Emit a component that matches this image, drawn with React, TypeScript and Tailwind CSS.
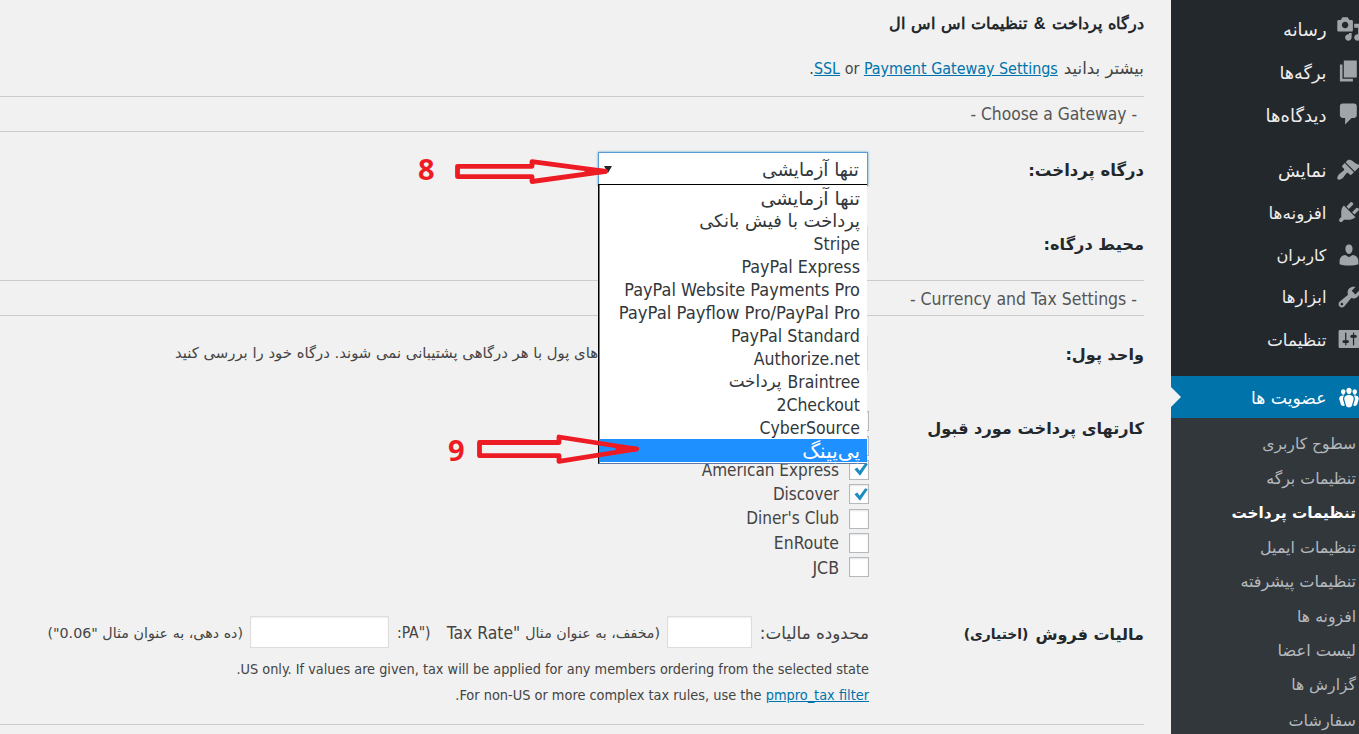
import type { ReactNode } from 'react';

const AR = "[font-family:'DejaVu_Sans',sans-serif] whitespace-nowrap";
const AR_HEAD = "[font-family:'Liberation_Sans',sans-serif] whitespace-nowrap";
const LA = "[font-family:'DejaVu_Sans_Condensed','DejaVu_Sans',sans-serif] whitespace-nowrap";

const ICONS = {
  media:
    'M13 11V4c0-.55-.45-1-1-1h-1.67L9 1H5L3.67 3H2c-.55 0-1 .45-1 1v7c0 .55.45 1 1 1h10c.55 0 1-.45 1-1zM7 4.5c1.38 0 2.5 1.12 2.5 2.5S8.38 9.5 7 9.5 4.5 8.38 4.5 7 5.62 4.5 7 4.5zM14 6h5v10.5c0 1.38-1.12 2.5-2.5 2.5S14 17.88 14 16.5s1.12-2.5 2.5-2.5c.17 0 .34.02.5.05V9h-3V6zm-4 8.05V13h2v3.5c0 1.38-1.12 2.5-2.5 2.5S7 17.88 7 16.5 8.12 14 9.5 14c.17 0 .34.02.5.05z',
  page: 'M6 15V2h10v13H6zm-1 1h8v2H3V5h2v11z',
  comments:
    'M5 2h9c1.1 0 2 .9 2 2v7c0 1.1-.9 2-2 2h-2l-5 5v-5H5c-1.1 0-2-.9-2-2V4c0-1.1.9-2 2-2z',
  appearance:
    'M14.48 11.06L7.41 3.99l1.5-1.5c.5-.56 2.3-.47 3.51.32 1.21.8 1.43 1.28 2.91 2.1 1.18.64 2.45 1.26 4.45.85zm-.71.71L6.7 4.7 4.93 6.47c-.39.39-.39 1.02 0 1.41l1.06 1.06c.39.39.39 1.03 0 1.42-.6.6-1.43 1.11-2.21 1.69-.35.26-.7.53-1.01.84C1.43 14.23.4 16.08 1.4 17.07c.99 1 2.84-.03 4.18-1.36.31-.31.58-.66.85-1.02.57-.78 1.08-1.61 1.69-2.21.39-.39 1.02-.39 1.41 0l1.06 1.06c.39.39 1.02.39 1.41 0z',
  plugins:
    'M13.11 4.36L9.87 7.6 8 5.73l3.24-3.24c.35-.34 1.05-.2 1.56.32.52.51.66 1.21.31 1.55zm-8 1.77l.91-1.12 9.01 9.01-1.19.84c-.71.71-2.63 1.16-3.82 1.16H6.14L4.9 17.26c-.59.59-1.54.59-2.12 0-.59-.58-.59-1.53 0-2.12l1.24-1.24v-3.88c0-1.13.4-3.19 1.09-3.89zm7.26 3.97l3.24-3.24c.34-.35 1.04-.21 1.55.31.52.51.66 1.21.31 1.55l-3.24 3.25z',
  users:
    'M10 9.25c-2.27 0-2.73-3.44-2.73-3.44C7 4.02 7.82 2 9.97 2c2.16 0 2.98 2.02 2.71 3.81 0 0-.41 3.44-2.68 3.44zm0 2.57L12.72 10c2.39 0 4.52 2.33 4.52 4.53v2.49s-3.65 1.13-7.24 1.13c-3.65 0-7.24-1.13-7.24-1.13v-2.49c0-2.25 1.94-4.48 4.47-4.48z',
  tools:
    'M16.68 9.77c-1.34 1.34-3.3 1.67-4.95.99l-5.41 6.52c-.99.99-2.59.99-3.58 0s-.99-2.59 0-3.57l6.52-5.42c-.68-1.65-.35-3.61.99-4.95 1.28-1.28 3.12-1.62 4.72-1.06l-2.89 2.89 2.82 2.82 2.86-2.87c.53 1.58.18 3.39-1.08 4.65zM3.81 16.21c.4.39 1.04.39 1.43 0 .4-.4.4-1.04 0-1.43-.39-.4-1.03-.4-1.43 0-.39.39-.39 1.03 0 1.43z',
  settings:
    'M18 16V4c0-.55-.45-1-1-1H3c-.55 0-1 .45-1 1v12c0 .55.45 1 1 1h14c.55 0 1-.45 1-1zM8 11h1c.55 0 1 .45 1 1s-.45 1-1 1H8v1.5c0 .28-.22.5-.5.5s-.5-.22-.5-.5V13H6c-.55 0-1-.45-1-1s.45-1 1-1h1V5.5c0-.28.22-.5.5-.5s.5.22.5.5V11zm5-2h-1c-.55 0-1-.45-1-1s.45-1 1-1h1V5.5c0-.28.22-.5.5-.5s.5.22.5.5V7h1c.55 0 1 .45 1 1s-.45 1-1 1h-1v5.5c0 .28-.22.5-.5.5s-.5-.22-.5-.5V9z',
  groups:
    'M8.03 4.46c-.29 1.28.55 3.46 1.97 3.46 1.41 0 2.25-2.18 1.96-3.46-.22-.98-1.08-1.63-1.96-1.63-.89 0-1.74.65-1.97 1.63zm-4.13.9c-.25 1.08.47 2.93 1.67 2.93s1.92-1.85 1.67-2.93c-.19-.83-.92-1.39-1.67-1.39s-1.48.56-1.67 1.39zm8.86 0c-.25 1.08.47 2.93 1.66 2.93 1.2 0 1.92-1.85 1.67-2.93-.19-.83-.92-1.39-1.67-1.39-.74 0-1.47.56-1.66 1.39zm-.59 11.43l1.25-4.3C14.2 10 12.71 8.47 10 8.47c-2.72 0-4.21 1.53-3.44 4.02l1.26 4.3C8.05 17.51 9 18 10 18c.98 0 1.94-.49 2.17-1.21zm-6.1-7.63c-.49.67-.96 1.83-.42 3.59l1.12 3.79c-.34.2-.77.31-1.2.31-.85 0-1.65-.41-1.85-1.03l-1.07-3.65c-.65-2.11.61-3.4 2.92-3.4.27 0 .54.02.79.06-.1.1-.2.22-.29.33zm8.35-.39c2.31 0 3.58 1.29 2.92 3.4l-1.07 3.65c-.2.62-1 1.03-1.85 1.03-.43 0-.86-.11-1.2-.31l1.11-3.77c.55-1.78.08-2.94-.42-3.61-.08-.11-.18-.23-.28-.33.25-.04.51-.06.78-.06z',
};

type IconName = keyof typeof ICONS;

function MenuItem({ icon, label, size, active }: { icon: IconName; label: string; size: string; active?: boolean }) {
  return (
    <div className={`flex items-center shrink-0 ${active ? 'h-[42px] bg-[#0073aa] text-white relative' : 'h-[42.3px] text-[#eee]'}`}>
      <svg
        viewBox="0 0 20 20"
        className={`w-[26px] h-[26px] -ms-[2.5px] shrink-0 ${active ? 'fill-white' : 'fill-[#a0a5aa]'}`}
      >
        <path d={ICONS[icon]} />
      </svg>
      <span className={`${AR} ${size} ms-[9px] pt-[3px]`}>{label}</span>
      {active && (
        <svg viewBox="0 0 10 20" className="absolute left-0 top-[11px] w-[10px] h-[20px] fill-[#f1f1f1]">
          <path d="M0 0L10 10L0 20Z" />
        </svg>
      )}
    </div>
  );
}

const SUBMENU: { label: string; cls: string }[] = [
  { label: 'سطوح کاربری', cls: 'text-[15.6px]' },
  { label: 'تنظیمات برگه', cls: 'text-[15.8px]' },
  { label: 'تنظیمات پرداخت', cls: 'text-[15.2px] font-bold text-white' },
  { label: 'تنظیمات ایمیل', cls: 'text-[15.9px]' },
  { label: 'تنظیمات پیشرفته', cls: 'text-[16.1px]' },
  { label: 'افزونه ها', cls: 'text-[15.7px]' },
  { label: 'لیست اعضا', cls: 'text-[16.2px]' },
  { label: 'گزارش ها', cls: 'text-[15.6px]' },
  { label: 'سفارشات', cls: 'text-[16px]' },
];

function Sidebar() {
  return (
    <aside className="w-[188px] shrink-0 bg-[#23282d] flex flex-col pt-[8px]">
      <MenuItem icon="media" label="رسانه" size="text-[17.8px]" />
      <MenuItem icon="page" label="برگه‌ها" size="text-[17.6px]" />
      <MenuItem icon="comments" label="دیدگاه‌ها" size="text-[18px]" />
      <div className="h-[14px] shrink-0" />
      <MenuItem icon="appearance" label="نمایش" size="text-[17.9px]" />
      <MenuItem icon="plugins" label="افزونه‌ها" size="text-[16.9px]" />
      <MenuItem icon="users" label="کاربران" size="text-[16.1px]" />
      <MenuItem icon="tools" label="ابزارها" size="text-[16.6px]" />
      <MenuItem icon="settings" label="تنظیمات" size="text-[16.9px]" />
      <div className="h-[15.6px] shrink-0" />
      <MenuItem icon="groups" label="عضویت ها" size="text-[17.2px]" active />
      <div className="grow bg-[#32373c] pt-[9px] ps-[3px] text-[#b4b9be]">
        {SUBMENU.map((s) => (
          <div key={s.label} className={`h-[34.55px] flex items-center ${AR} ${s.cls}`}>
            {s.label}
          </div>
        ))}
      </div>
    </aside>
  );
}

function Section({ children }: { children: ReactNode }) {
  return (
    <div dir="ltr" className={`h-[36px] shrink-0 border-y border-[#ccc] flex items-center justify-end pt-[2px] pr-[7px] text-[#555] ${LA}`}>
      {children}
    </div>
  );
}

function Label({ size, children }: { size: string; children: ReactNode }) {
  return <div className={`w-[275px] shrink-0 pt-[4px] font-bold text-[#23282d] ${AR} ${size}`}>{children}</div>;
}

const OPTIONS: { text: string; cls: string; arabic?: boolean }[] = [
  { text: 'تنها آزمایشی', cls: 'text-[18.9px]', arabic: true },
  { text: 'پرداخت با فیش بانکی', cls: 'text-[17.9px]', arabic: true },
  { text: 'Stripe', cls: 'text-[17.4px]' },
  { text: 'PayPal Express', cls: 'text-[17.75px]' },
  { text: 'PayPal Website Payments Pro', cls: 'text-[17.95px]' },
  { text: 'PayPal Payflow Pro/PayPal Pro', cls: 'text-[18.3px]' },
  { text: 'PayPal Standard', cls: 'text-[17.8px]' },
  { text: 'Authorize.net', cls: 'text-[17.5px]' },
  { text: 'Braintree', cls: 'text-[17.4px]' },
  { text: '2Checkout', cls: 'text-[17.5px]' },
  { text: 'CyberSource', cls: 'text-[17.5px]' },
];

function GatewaySelect() {
  return (
    <div className="relative w-[270px] h-[34px] ms-px bg-white border border-[#5b9dd9] shadow-[0_0_2px_rgba(30,140,190,0.8)] flex items-center justify-between ps-[8px] pe-[5px] text-[#32373c]">
      <span className={`${AR} text-[18.4px] pt-[2px]`}>تنها آزمایشی</span>
      <svg viewBox="0 0 8 7" className="w-[8px] h-[7px] fill-[#23282d]">
        <path d="M0 0H8L4 7Z" />
      </svg>
      <div className="absolute z-10 left-[-1px] top-[31px] w-[269px] h-[280px] bg-white border-t border-t-black border-l border-l-black border-b border-b-[#5b7aa8]">
        <div className="border-l border-[#5b7fc0] pt-px h-full">
          {OPTIONS.map((o) => (
            <div key={o.text} className={`h-[23px] ps-[7px] pt-px flex items-center ${o.arabic ? AR : LA} ${o.cls}`}>
              {o.text}
              {o.text === 'Braintree' && <span className={`${AR} text-[16.8px] ms-[6px]`}>پرداخت</span>}
            </div>
          ))}
          <div className={`h-[23px] ps-[7px] flex items-center bg-[#1e90ff] text-white text-[20px] ${AR}`}>پی‌پینگ</div>
        </div>
      </div>
    </div>
  );
}

const CARDS: { id: string; name?: string; on: boolean; cls: string }[] = [
  { id: 'a', on: false, cls: '' },
  { id: 'b', on: false, cls: '' },
  { id: 'c', name: 'American Express', on: true, cls: 'text-[17px]' },
  { id: 'd', name: 'Discover', on: true, cls: 'text-[16.9px]' },
  { id: 'e', name: "Diner's Club", on: false, cls: 'text-[17px]' },
  { id: 'f', name: 'EnRoute', on: false, cls: 'text-[17.4px]' },
  { id: 'g', name: 'JCB', on: false, cls: 'text-[17.6px]' },
];

function CardRow({ name, on, cls }: { name?: string; on: boolean; cls: string }) {
  return (
    <div className="h-[24.35px] flex items-center text-[#444]">
      <span className="w-[20px] h-[20px] bg-white border border-[#b4b9be] shadow-[inset_0_1px_2px_rgba(0,0,0,0.1)] flex items-center justify-center shrink-0">
        {on && (
          <svg viewBox="0 0 14 13" className="w-[14px] h-[13px] mr-[-3px]">
            <path d="M0.4 6.3L3.3 4.5L5.6 7.8L11.2 0.3L13.8 1.3L6 12.8Z" fill="#1e8cbe" />
          </svg>
        )}
      </span>
      {name && <span className={`${LA} ${cls} ms-[10px] pt-px`}>{name}</span>}
    </div>
  );
}

function TaxRow() {
  return (
    <div className="h-[110px] shrink-0 flex text-[#444] border-b border-[#ccc] -mt-px">
      <div className={`w-[275px] shrink-0 h-[36px] pt-[3px] flex items-center font-bold text-[#23282d] ${AR} text-[16px]`}>
        مالیات فروش<span className="text-[13.9px] ms-[7px]">(اختیاری)</span>
      </div>
      <div className="grow pt-px">
        <div className="h-[32px] flex items-center">
          <span className={`${AR} text-[16.8px] w-[117px] pt-[3px]`}>محدوده مالیات:</span>
          <span className="w-[85px] h-[32px] bg-white border border-[#ddd] shadow-[inset_0_1px_2px_rgba(0,0,0,0.07)] shrink-0" />
          <span className={`${AR} text-[14.2px] ms-[7px] pt-[3px]`}>(مخفف، به عنوان مثال</span>
          <span dir="ltr" className={`${LA} text-[17.4px] mr-[5px] pt-[2px]`}>Tax Rate"</span>
          <span dir="ltr" className={`${LA} text-[15.5px] mr-auto pt-[3px]`}>:PA")</span>
          <span className="w-[139px] h-[32px] bg-white border border-[#ddd] shadow-[inset_0_1px_2px_rgba(0,0,0,0.07)] shrink-0 ms-[8px]" />
          <span className={`${AR} text-[14.25px] ms-[7px] w-[243px] pt-[3px]`}>(ده دهی، به عنوان مثال "0.06")</span>
        </div>
        <div className={`h-[26px] mt-[9px] flex items-center ${LA} text-[14.35px]`}>
          US only. If values are given, tax will be applied for any members ordering from the selected state.
        </div>
        <div className={`h-[26px] flex items-center ${LA} text-[14.4px]`}>
          <span dir="ltr">
            .For non-US or more complex tax rules, use the <a className="text-[#0073aa] underline">pmpro_tax filter</a>
          </span>
        </div>
      </div>
    </div>
  );
}

const DIGIT = "absolute z-20 text-[29px] leading-[40px] font-bold text-[#ed1c24] [font-family:'Open_Sans','Noto_Sans',sans-serif]";

function Annotations() {
  return (
    <>
      <svg viewBox="0 0 240 320" className="absolute z-20 left-[410px] top-[150px] w-[240px] h-[320px] pointer-events-none">
        <g fill="none" stroke="#ed1c24" strokeWidth="4.8" strokeLinejoin="round">
          <path d="M47.5 16.3H122V11.7L195.5 21.3L122 31.5V26.6H47.5Z" />
          <path d="M69.5 292.5H149V287L226.5 299L149 311.3V305.7H69.5Z" />
        </g>
        <g fill="#ed1c24" stroke="#ed1c24" strokeWidth="4.8" strokeLinejoin="round">
          <path d="M177 20L195.5 21.3L177 23.2Z" />
          <path d="M208 297.5L226.5 299L208 300.8Z" />
        </g>
      </svg>
      <span lang="en" dir="ltr" className={`${DIGIT} left-[418px] top-[149px]`}>8</span>
      <span lang="en" dir="ltr" className={`${DIGIT} left-[448px] top-[430px]`}>9</span>
    </>
  );
}

export default function App() {
  return (
    <div dir="rtl" className="relative w-[1359px] h-[734px] flex overflow-hidden bg-[#f1f1f1]">
      <Sidebar />
      <main className="w-[1171px] shrink-0 ps-[27px] flex flex-col">
        <h2 className={`h-[44px] shrink-0 flex items-center pt-[2px] font-bold text-[#23282d] text-[16.3px] [word-spacing:1.75px] ${AR_HEAD}`}>
          درگاه پرداخت &amp; تنظیمات اس اس ال
        </h2>
        <div className="h-[52px] shrink-0 pb-[2px] flex items-center text-[#444]">
          <span className={`${AR} text-[16.6px]`}>بیشتر بدانید</span>
          <span dir="ltr" className={`${LA} text-[15.95px] mr-[6px]`}>
            .<a className="text-[#0073aa] underline">SSL</a> or <a className="text-[#0073aa] underline">Payment Gateway Settings</a>
          </span>
        </div>
        <Section><span className="text-[17.3px]">- Choose a Gateway -</span></Section>
        <div className="h-[74px] shrink-0 flex items-center">
          <Label size="text-[16.5px]">درگاه پرداخت:</Label>
          <GatewaySelect />
        </div>
        <div className="h-[74px] shrink-0 flex items-center">
          <Label size="text-[16.2px]">محیط درگاه:</Label>
          <div className="w-[270px] h-[35px] ms-px bg-white border border-[#ddd]" />
        </div>
        <Section><span className="text-[17.5px]">- Currency and Tax Settings -</span></Section>
        <div className="h-[75px] shrink-0 flex items-center text-[#444]">
          <Label size="text-[16.1px]">واحد پول:</Label>
          <div className="w-[270px] h-[35px] ms-px bg-white border border-[#ddd]" />
          <span className={`${AR} text-[14.85px]`}>های پول با هر درگاهی پشتیبانی نمی شوند. درگاه خود را بررسی کنید</span>
        </div>
        <div className="h-[225px] shrink-0 flex pt-[18px]">
          <div className="h-[36px] flex items-center">
            <Label size="text-[16.15px]">کارتهای پرداخت مورد قبول</Label>
          </div>
          <div>
            {CARDS.map((c) => (
              <CardRow key={c.id} name={c.name} on={c.on} cls={c.cls} />
            ))}
          </div>
        </div>
        <TaxRow />
      </main>
      <Annotations />
    </div>
  );
}
